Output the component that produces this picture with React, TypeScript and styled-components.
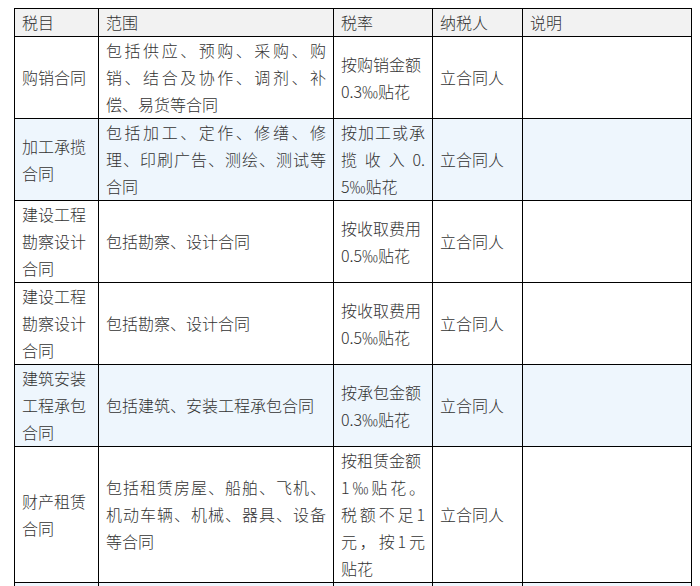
import React from "react";
import styled, { createGlobalStyle } from "styled-components";

const Global = createGlobalStyle`
  html, body { margin: 0; padding: 0; background: #ffffff; }
  body {
    font-family: "Noto Sans CJK SC", "Noto Sans", "Liberation Sans", sans-serif;
    font-weight: 300;
    color: #333333;
  }
`;

const Page = styled.div`
  padding: 8px 0 0 14px;
`;

const Table = styled.table`
  border-collapse: collapse;
  table-layout: fixed;
  width: 677px;
  font-size: 16px;
  line-height: 27px;
`;

const HeadCell = styled.th`
  border: 1px solid #000000;
  background: #f2f2f2;
  font-weight: 300;
  text-align: left;
  padding: 0 7px;
  height: 27px;
  vertical-align: middle;
  color: #333333;
`;

const Row = styled.tr<{ $tint?: boolean }>`
  background: ${(p) => (p.$tint ? "#eef6fd" : "#ffffff")};
`;

const Cell = styled.td`
  border: 1px solid #000000;
  padding: 0 7px;
  vertical-align: middle;
  text-align: left;
  height: 81px;
`;

const Line = styled.div<{ $justify?: boolean }>`
  white-space: nowrap;
  text-align: ${(p) => (p.$justify ? "justify" : "left")};
  text-align-last: ${(p) => (p.$justify ? "justify" : "auto")};
  text-justify: inter-character;
`;

type L = { t: string; j?: boolean };
type RowData = {
  tint?: boolean;
  item: L[];
  scope: L[];
  rate: L[];
  payer: string;
  note: string;
};

const rows: RowData[] = [
  {
    item: [{ t: "购销合同" }],
    scope: [
      { t: "包括供应、预购、采购、购", j: true },
      { t: "销、结合及协作、调剂、补", j: true },
      { t: "偿、易货等合同" },
    ],
    rate: [{ t: "按购销金额" }, { t: "0.3‰贴花" }],
    payer: "立合同人",
    note: "",
  },
  {
    tint: true,
    item: [{ t: "加工承揽" }, { t: "合同" }],
    scope: [
      { t: "包括加工、定作、修缮、修", j: true },
      { t: "理、印刷广告、测绘、测试等", j: true },
      { t: "合同" },
    ],
    rate: [
      { t: "按加工或承", j: true },
      { t: "揽收入0.", j: true },
      { t: "5‰贴花" },
    ],
    payer: "立合同人",
    note: "",
  },
  {
    item: [{ t: "建设工程" }, { t: "勘察设计" }, { t: "合同" }],
    scope: [{ t: "包括勘察、设计合同" }],
    rate: [{ t: "按收取费用" }, { t: "0.5‰贴花" }],
    payer: "立合同人",
    note: "",
  },
  {
    item: [{ t: "建设工程" }, { t: "勘察设计" }, { t: "合同" }],
    scope: [{ t: "包括勘察、设计合同" }],
    rate: [{ t: "按收取费用" }, { t: "0.5‰贴花" }],
    payer: "立合同人",
    note: "",
  },
  {
    tint: true,
    item: [{ t: "建筑安装" }, { t: "工程承包" }, { t: "合同" }],
    scope: [{ t: "包括建筑、安装工程承包合同" }],
    rate: [{ t: "按承包金额" }, { t: "0.3‰贴花" }],
    payer: "立合同人",
    note: "",
  },
  {
    item: [{ t: "财产租赁" }, { t: "合同" }],
    scope: [
      { t: "包括租赁房屋、船舶、飞机、", j: true },
      { t: "机动车辆、机械、器具、设备", j: true },
      { t: "等合同" },
    ],
    rate: [
      { t: "按租赁金额" },
      { t: "1‰贴花。", j: true },
      { t: "税额不足1", j: true },
      { t: "元，按1元", j: true },
      { t: "贴花" },
    ],
    payer: "立合同人",
    note: "",
  },
  {
    tint: true,
    item: [],
    scope: [],
    rate: [],
    payer: "",
    note: "",
  },
];

const Lines = ({ lines }: { lines: L[] }) => (
  <>
    {lines.map((l, i) => (
      <Line key={i} $justify={l.j}>
        {l.t}
      </Line>
    ))}
  </>
);

export default function App() {
  return (
    <>
      <Global />
      <Page>
        <Table>
          <colgroup>
            <col style={{ width: 84 }} />
            <col style={{ width: 235 }} />
            <col style={{ width: 99 }} />
            <col style={{ width: 90 }} />
            <col style={{ width: 169 }} />
          </colgroup>
          <thead>
            <tr>
              <HeadCell>税目</HeadCell>
              <HeadCell>范围</HeadCell>
              <HeadCell>税率</HeadCell>
              <HeadCell>纳税人</HeadCell>
              <HeadCell>说明</HeadCell>
            </tr>
          </thead>
          <tbody>
            {rows.map((r, i) => (
              <Row key={i} $tint={r.tint}>
                <Cell>
                  <Lines lines={r.item} />
                </Cell>
                <Cell>
                  <Lines lines={r.scope} />
                </Cell>
                <Cell>
                  <Lines lines={r.rate} />
                </Cell>
                <Cell>{r.payer}</Cell>
                <Cell>{r.note}</Cell>
              </Row>
            ))}
          </tbody>
        </Table>
      </Page>
    </>
  );
}
